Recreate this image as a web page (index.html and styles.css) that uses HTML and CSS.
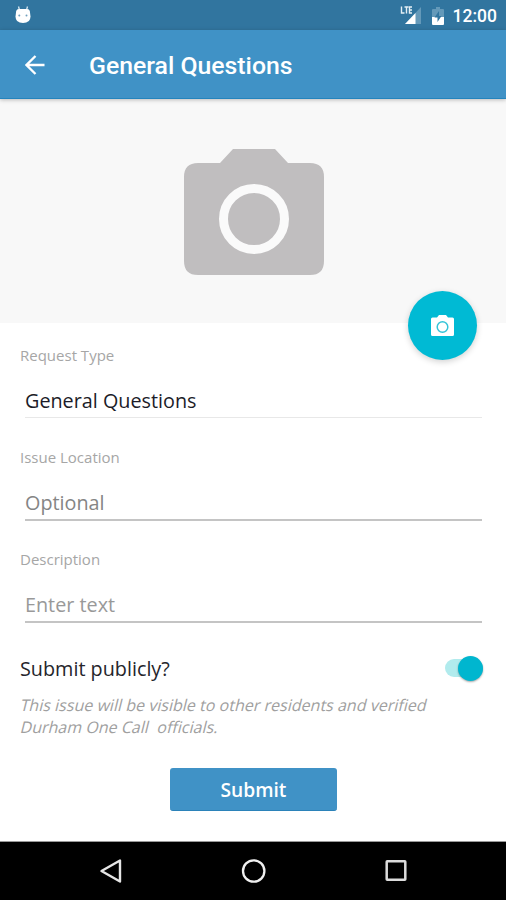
FILE: index.html
```html
<!DOCTYPE html>
<html lang="en">
<head>
  <meta charset="UTF-8" />
  <meta name="viewport" content="width=device-width, initial-scale=1.0" />
  <title>General Questions</title>
  <link rel="stylesheet" href="styles.css">
</head>
<body>
  <div class="screen">
    <div class="status-bar">
      <svg class="droid" width="16" height="18" viewBox="0 0 16 18">
        <path d="M3.500 0.500L4.500 4M12.500 0.500L11.500 4" stroke="#d5e6f0" stroke-width="1.300"/>
        <path d="M1.200 5Q1.700 3 4 3H12Q14.300 3 14.800 5L15.500 10.500Q15.500 17 8 17Q0.500 17 0.500 10.500Z" fill="#fff"/>
        <circle cx="4.300" cy="9.500" r="1" fill="#6f9fbd"/>
        <circle cx="11.500" cy="9.500" r="1" fill="#6f9fbd"/>
      </svg>
      <div class="status-icons">
        <svg width="22" height="20" viewBox="0 0 22 20">
          <path d="M21 2V19H5Z" fill="#6499b9"/>
          <path d="M15.500 8V19H5Z" fill="#fff"/>
          <path d="M0 0H13V9.500H0Z" fill="#31759f"/>
          <path d="M1.500 1.500V8H4.500M4.500 2H8.500M6.500 2V8.500M12 2H9.500V8H12M9.500 5H12" fill="none" stroke="#e4eff5" stroke-width="1.400"/>
        </svg>
        <svg class="battery" width="12" height="18" viewBox="0 0 12 18">
          <path d="M4 0H8V2H11Q12 2 12 3V10H0V3Q0 2 1 2H4Z" fill="#6499b9"/>
          <path d="M0 10H12V17Q12 18 11 18H1Q0 18 0 17Z" fill="#fff"/>
          <path d="M7 4L2.500 10.500H5.500V15L9.500 9H7Z" fill="#31759f"/>
        </svg>
        <span class="clock">12:00</span>
      </div>
    </div>

    <header class="toolbar">
      <svg class="back" width="20" height="20" viewBox="0 0 20 20">
        <path d="M19.500 10H2M10.500 1L1.500 10L10.500 19" fill="none" stroke="#fff" stroke-width="2.300"/>
      </svg>
      <h1>General Questions</h1>
    </header>

    <div class="photo">
      <svg width="140" height="126" viewBox="0 0 140 126">
        <path d="M49 0H91L104 14H126Q140 14 140 28V112Q140 126 126 126H14Q0 126 0 112V28Q0 14 14 14H36Z" fill="#c0bebf"/>
        <circle cx="70" cy="70" r="30.500" fill="none" stroke="#fafafa" stroke-width="9"/>
      </svg>
      <button class="fab" aria-label="Add photo">
        <svg width="23" height="21" viewBox="0 0 23 21">
          <path d="M8 0H15L17 2.500H21.500Q23 2.500 23 4V19.500Q23 21 21.500 21H1.500Q0 21 0 19.500V4Q0 2.500 1.500 2.500H6Z" fill="#fff"/>
          <circle cx="11.500" cy="12" r="5.300" fill="none" stroke="#35c4d8" stroke-width="1.500"/>
        </svg>
      </button>
    </div>

    <form class="form">
      <div class="field">
        <label>Request Type</label>
        <div class="value selected">General Questions</div>
      </div>
      <div class="field">
        <label>Issue Location</label>
        <div class="value">Optional</div>
      </div>
      <div class="field">
        <label>Description</label>
        <div class="value enter">Enter text</div>
      </div>

      <div class="public-row">
        <span>Submit publicly?</span>
        <div class="switch"><div class="thumb"></div></div>
      </div>
      <p class="note">
        <span>This issue will be visible to other residents and verified</span>
        <span>Durham One Call&nbsp; officials.</span>
      </p>

      <button type="button" class="submit">Submit</button>
    </form>

    <nav class="nav-bar">
      <svg width="24" height="26" viewBox="0 0 24 26">
        <path d="M21 2.500V23.500L2.500 13Z" fill="none" stroke="#e6e6e6" stroke-width="2.400" stroke-linejoin="round"/>
      </svg>
      <svg width="26" height="26" viewBox="0 0 26 26">
        <circle cx="12.700" cy="13" r="10.700" fill="none" stroke="#f0f0f0" stroke-width="2.300"/>
      </svg>
      <svg width="24" height="26" viewBox="0 0 24 26">
        <rect x="2.700" y="3.200" width="18.600" height="18.600" rx="0.500" fill="none" stroke="#dcdcdc" stroke-width="2.500"/>
      </svg>
    </nav>
  </div>
</body>
</html>
```
FILE: styles.css
```css
* { margin: 0; padding: 0; box-sizing: border-box; }
body {
  font-family: 'Open Sans', sans-serif;
  background: #fff;
}
svg { display: block; }
.screen {
  display: flex;
  flex-direction: column;
  width: 506px;
  height: 900px;
  overflow: hidden;
}
.status-bar {
  display: flex;
  justify-content: space-between;
  align-items: center;
  height: 30px;
  padding: 0 9px 0 15px;
  background: #31759f;
}
.status-icons {
  display: flex;
  align-items: center;
}
.battery { margin: 2px 0 0 10px; }
.clock {
  margin: 2px 0 0 9px;
  font-family: Roboto, sans-serif;
  font-size: 17.5px;
  font-weight: 500;
  line-height: 20px;
  color: #fff;
}
.toolbar {
  display: flex;
  align-items: center;
  height: 69px;
  padding-left: 25px;
  background: #4092c6;
  border-bottom: 1px solid #2484bd;
  box-shadow: 0 1px 4px rgba(0,0,0,0.25);
  z-index: 1;
}
.back { margin-top: 1px; }
.toolbar h1 {
  margin: 3px 0 0 44px;
  font-family: Roboto, sans-serif;
  font-size: 24.8px;
  font-weight: 500;
  line-height: 30px;
  color: #fff;
}
.photo {
  position: relative;
  display: flex;
  justify-content: center;
  height: 224px;
  padding: 50px 0 0 1px;
  background: #f8f8f8;
}
.fab {
  position: absolute;
  right: 29px;
  bottom: -37px;
  display: flex;
  align-items: center;
  justify-content: center;
  width: 69px;
  height: 69px;
  border: none;
  border-radius: 50%;
  background: #00bad4;
  box-shadow: 0 2px 6px rgba(0,0,0,0.18);
}
.form {
  display: flex;
  flex-direction: column;
  height: 518px;
  padding: 22px 24px 0 20px;
}
.field {
  height: 102px;
}
.field label {
  display: block;
  font-size: 15px;
  line-height: 20px;
  color: #a6a6a6;
}
.value {
  height: 31px;
  margin: 23px 0 0 5px;
  border-bottom: 2px solid #c4c4c4;
  font-size: 19.8px;
  line-height: 26px;
  color: #858585;
}
.enter { color: #999; }
.selected {
  height: 30px;
  border-bottom: 1px solid #e8e8e8;
  color: #1c1c28;
}
.public-row {
  display: flex;
  justify-content: space-between;
  align-items: center;
  height: 30px;
  margin: 2px -1px 0 0;
  font-size: 19.8px;
  color: #25252b;
}
.switch {
  display: flex;
  align-items: center;
  justify-content: flex-end;
  width: 38px;
  height: 18px;
  border-radius: 9px;
  background: #b1ebed;
}
.thumb {
  flex: none;
  width: 25px;
  height: 25px;
  border-radius: 50%;
  background: #00b6cf;
  box-shadow: 0 1px 2px rgba(0,0,0,0.35);
}
.note {
  margin: 11px 0 0 1px;
  font-size: 16px;
  letter-spacing: 0.02px;
  line-height: 22px;
  white-space: nowrap;
  color: #a0a0a0;
}
/* slanted regular face, wider than the real italic */
.note span {
  display: block;
  transform: skewX(-14deg);
}
.submit {
  width: 167px;
  height: 43px;
  margin: 30px 0 0 150px;
  border: none;
  border-bottom: 1px solid #2b82b9;
  border-radius: 3px;
  background: #4092c6;
  font-family: 'Open Sans', sans-serif;
  font-size: 19.2px;
  font-weight: 600;
  color: #fff;
}
.nav-bar {
  display: flex;
  flex: 1;
  align-items: center;
  justify-content: space-between;
  padding: 0 98px 0 99px;
  border-top: 1px solid #999;
  background: #000;
}
```
